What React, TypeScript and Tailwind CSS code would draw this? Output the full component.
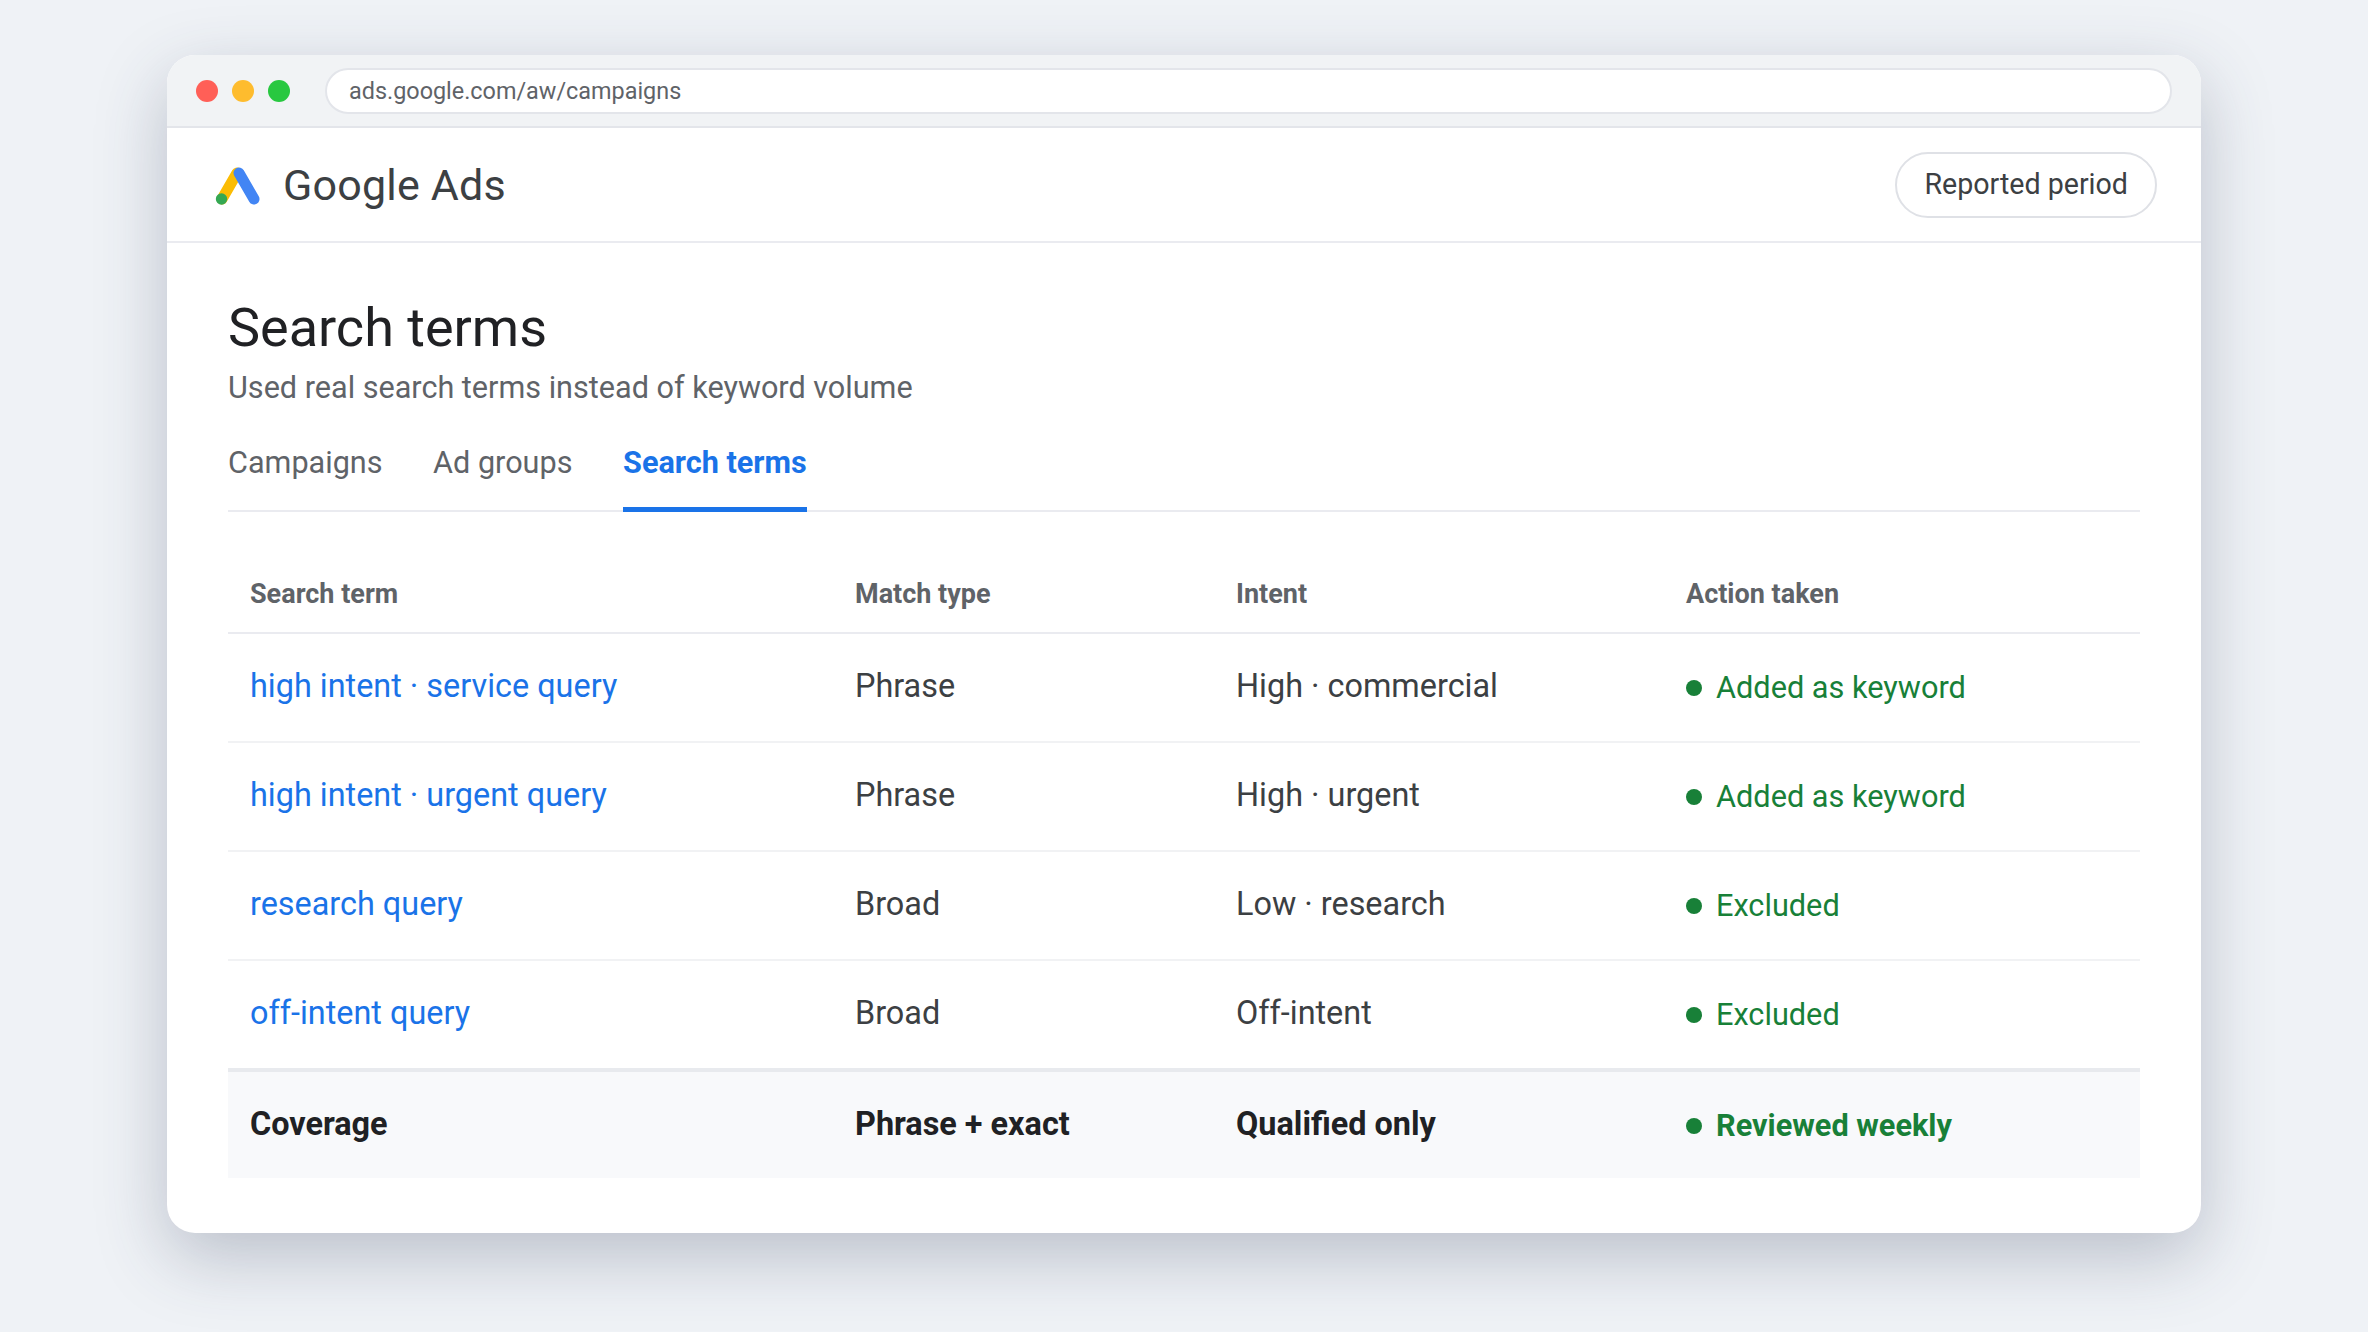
const rows = [
  ["high intent · service query", "Phrase", "High · commercial", "Added as keyword"],
  ["high intent · urgent query", "Phrase", "High · urgent", "Added as keyword"],
  ["research query", "Broad", "Low · research", "Excluded"],
  ["off-intent query", "Broad", "Off-intent", "Excluded"],
];

function Status({ label, bold }: { label: string; bold?: boolean }) {
  return (
    <div className={`flex items-center gap-[14px] pt-[4px] text-[30.7px] text-[#188038] ${bold ? "font-bold" : ""}`}>
      <span className="h-[16px] w-[16px] shrink-0 rounded-full bg-[#188038]" />
      <span>{label}</span>
    </div>
  );
}

export default function App() {
  return (
    <div className="flex h-[1332px] w-[2368px] items-start justify-center overflow-hidden bg-[#eff2f6] pt-[55px] font-['Roboto',sans-serif]">
      <div className="flex h-[1178px] w-[2034px] flex-col overflow-hidden rounded-[28px] bg-white shadow-[0_24px_70px_rgba(50,60,90,0.28)]">
        <div className="flex h-[73px] shrink-0 items-center gap-[14px] border-b-2 border-[#e3e5ea] bg-[#f1f3f5] pl-[29px] pr-[29px] pt-[1px]">
          <span className="h-[22px] w-[22px] rounded-full bg-[#ff5f57]" />
          <span className="h-[22px] w-[22px] rounded-full bg-[#febc2e]" />
          <span className="h-[22px] w-[22px] rounded-full bg-[#28c840]" />
          <div className="ml-[21px] flex h-[46px] flex-1 items-center rounded-full border-2 border-[#e3e5ea] bg-white pl-[22px] pt-[1px] text-[23.4px] text-[#5f6368]">
            ads.google.com/aw/campaigns
          </div>
        </div>
        <div className="flex h-[115px] shrink-0 items-center justify-between border-b-2 border-[#eaebf0] pl-[47px] pr-[44px]">
          <div className="flex items-center gap-[21px] pt-[2px]">
            <svg width="48" height="48" viewBox="0 0 48 48" className="-mt-[2px]">
              <line x1="8" y1="38" x2="23" y2="12" stroke="#fbbc04" strokeWidth="11" strokeLinecap="round" />
              <line x1="25" y1="12" x2="40" y2="38" stroke="#4285f4" strokeWidth="11" strokeLinecap="round" />
              <circle cx="7.5" cy="38" r="5.7" fill="#34a853" />
            </svg>
            <span className="text-[43px] leading-none tracking-[0.2px] text-[#3c4043]">Google Ads</span>
          </div>
          <div className="flex h-[66px] items-center rounded-full border-2 border-[#dfe1e6] px-[27px] text-[28.6px] text-[#3c4043]">
            Reported period
          </div>
        </div>
        <div className="flex flex-1 flex-col px-[61px] pt-[53px]">
          <h1 className="text-[54px] leading-[64px] font-normal text-[#202124]">Search terms</h1>
          <p className="mt-[8px] text-[30.6px] leading-[40px] text-[#5f6368]">Used real search terms instead of keyword volume</p>
          <div className="mt-[24px] flex h-[80px] shrink-0 gap-[50.6px] border-b-2 border-[#eaebf0] text-[30.6px] text-[#5f6368]">
            <div className="pt-[8px]">Campaigns</div>
            <div className="pt-[8px]">Ad groups</div>
            <div className="-mb-[2px] border-b-[5px] border-[#1a73e8] pt-[8px] font-bold text-[#1a73e8]">Search terms</div>
          </div>
          <div className="mt-[45px] grid h-[77px] shrink-0 grid-cols-[605px_381px_450px_1fr] items-center border-b-2 border-[#eaebf0] pl-[22px] text-[27px] font-bold text-[#5f6368]">
            <div>Search term</div>
            <div>Match type</div>
            <div>Intent</div>
            <div>Action taken</div>
          </div>
          {rows.map((r, i) => (
            <div key={i} className={`grid shrink-0 grid-cols-[605px_381px_450px_1fr] items-center pb-[2px] pl-[22px] text-[32.4px] text-[#3c4043] ${i < 3 ? "h-[109px] border-b-2 border-[#f1f2f4]" : "h-[107px]"}`}>
              <div className="text-[#1a73e8]">{r[0]}</div>
              <div>{r[1]}</div>
              <div>{r[2]}</div>
              <Status label={r[3]} />
            </div>
          ))}
          <div className="grid h-[110px] shrink-0 grid-cols-[605px_381px_450px_1fr] items-center border-t-4 border-[#e8eaee] bg-[#f8f9fb] pb-[2px] pl-[22px] text-[32.4px] font-bold text-[#202124]">
            <div>Coverage</div>
            <div>Phrase + exact</div>
            <div>Qualified only</div>
            <Status label="Reviewed weekly" bold />
          </div>
        </div>
      </div>
    </div>
  );
}
